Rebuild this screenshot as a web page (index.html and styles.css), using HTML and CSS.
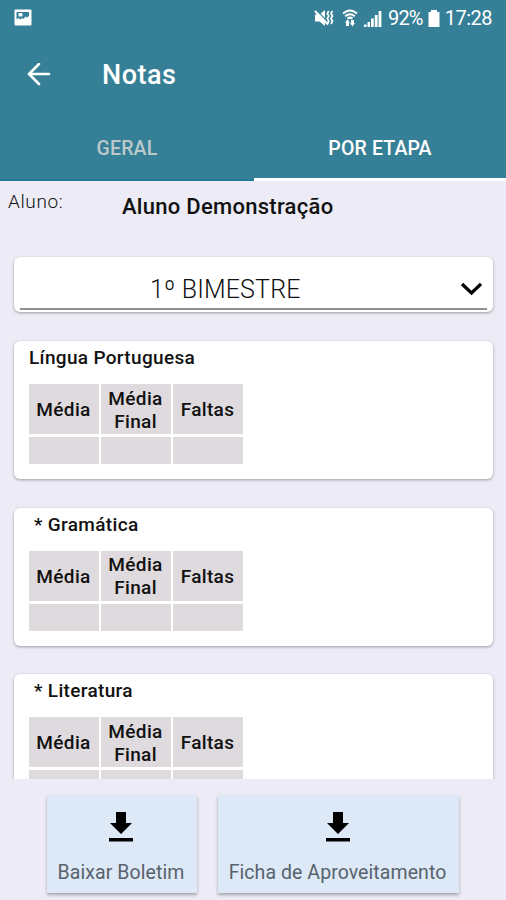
FILE: index.html
```html
<!DOCTYPE html>
<html lang="pt-BR">
<head>
<meta charset="utf-8">
<title>Notas</title>
<link rel="stylesheet" href="styles.css">
</head>
<body>
<div class="app">
  <header class="header">
    <div class="status">
      <svg class="status-photo" width="18" height="18" viewBox="0 0 18 18"><path fill="#fff" fill-rule="evenodd" d="M1.500 0.500h15q1 0 1 1v14q0 1-1 1h-15q-1 0-1-1v-14q0-1 1-1zM2.500 3v7.500l2-1.500 2 1.500 1.500-1.500 1.500 1 2-2.500 1.500 1 2-1.500V3z"/><rect x="4.500" y="4" width="4" height="3.500" rx="1" fill="#fff"/></svg>
      <div class="status-right">
        <svg class="i-mute" width="20" height="18" viewBox="0 0 20 18"><path fill="#fff" d="M1 5.500h4.500L11 1v16l-5.500-4.500H1z"/><path d="M2.500 1l12 13" stroke="#368097" stroke-width="1.200"/><path d="M1 2l13 13.500" stroke="#fff" stroke-width="2"/><path d="M14.800 2l-1.500 2.500 1.500 2.500-1.500 2.500 1.500 2.500-1.500 3M18.500 2L17 4.500 18.500 7 17 9.500l1.500 2.500-1.500 3" stroke="#fff" stroke-width="1.700" fill="none"/></svg>
        <svg class="i-wifi" width="16" height="18" viewBox="0 0 16 18"><path d="M1 4.500q7-6 14 0M3.200 7.200q4.800-4 9.600 0M5.500 9.600q2.500-2 5 0" stroke="#fff" stroke-width="2" fill="none"/><path fill="#fff" d="M3 13.500L5.500 10.500 8 13.500H7V17H4v-3.500zM9 11h3v3h1l-2.500 3.500L8 14h1z"/></svg>
        <svg class="i-signal" width="18" height="17" viewBox="0 0 18 17"><path fill="#fff" d="M0 14.500h2.500V17H0zM3.500 12H6v5H3.500zM7 8.500h2.800V17H7zM10.800 5h2.800v12h-2.800zM14.600 1h2.800v16h-2.800z"/></svg>
        <span class="pct">92%</span>
        <svg class="i-batt" width="12" height="17" viewBox="0 0 12 17"><path fill="#fff" d="M3 0h6v2h2.500v15H.5V2H3z"/></svg>
        <span class="clock">17:28</span>
      </div>
    </div>
    <div class="toolbar">
      <svg width="24" height="24" viewBox="0 0 24 24" fill="none" stroke="#fff" stroke-width="2.600" stroke-linecap="round"><path d="M22 11H2M12 1L2 11l10 10"/></svg>
      <h1 class="title">Notas</h1>
    </div>
    <nav class="tabs">
      <div class="tab"><span>GERAL</span></div>
      <div class="tab active"><span>POR ETAPA</span></div>
    </nav>
  </header>
  <div class="student"><span class="label">Aluno:</span><strong class="name">Aluno Demonstração</strong></div>
  <div class="select">
    <div class="select-line">
      <span class="select-value">1º BIMESTRE</span>
      <svg width="22" height="14" viewBox="0 0 22 14" fill="none" stroke="#000" stroke-width="3.200"><path d="M2 2l9.500 9L21 2"/></svg>
    </div>
  </div>
  <main class="list">
    <section class="card">
      <h2>Língua Portuguesa</h2>
      <div class="grades"><b>Média</b><b>Média<br>Final</b><b>Faltas</b><i></i><i></i><i></i></div>
    </section>
    <section class="card sub">
      <h2>* Gramática</h2>
      <div class="grades"><b>Média</b><b>Média<br>Final</b><b>Faltas</b><i></i><i></i><i></i></div>
    </section>
    <section class="card sub">
      <h2>* Literatura</h2>
      <div class="grades"><b>Média</b><b>Média<br>Final</b><b>Faltas</b><i></i><i></i><i></i></div>
    </section>
  </main>
  <footer class="actions">
    <div class="action small">
      <svg width="26" height="32" viewBox="0 0 26 32"><path d="M8 1h10v11h6L13 23 2 12h6zM1 27h24v3.500H1z"/></svg>
      <span>Baixar Boletim</span>
    </div>
    <div class="action wide">
      <svg width="26" height="32" viewBox="0 0 26 32"><path d="M8 1h10v11h6L13 23 2 12h6zM1 27h24v3.500H1z"/></svg>
      <span>Ficha de Aproveitamento</span>
    </div>
  </footer>
</div>
</body>
</html>
```
FILE: styles.css
```css
* { box-sizing: border-box; }
body { margin: 0; font-family: Roboto, sans-serif; color: #111; background: #edebf6; }
svg { display: block; flex: none; }
.app { width: 506px; height: 900px; overflow: hidden; display: flex; flex-direction: column; }
.header { height: 181px; flex: none; background: #368097; color: #fff; display: flex; flex-direction: column; }
.status { height: 36px; padding: 0 14px; display: flex; justify-content: space-between; align-items: center; }
.status-right { display: flex; align-items: center; font-size: 20px; }
.pct { letter-spacing: -0.8px; }
.clock { letter-spacing: -0.5px; }
.i-mute { margin-right: 8px; }
.i-wifi { margin-right: 6px; }
.i-signal { margin-right: 6px; }
.i-batt { margin: 0 5px 0 5px; }
.toolbar { height: 78px; padding: 0 27px; display: flex; align-items: center; }
.title { margin: 0 0 0 51px; font-size: 27px; font-weight: 500; line-height: 32px; letter-spacing: 0.5px; }
.tabs { flex: 1; display: flex; font-size: 19.500px; font-weight: 500; letter-spacing: 0.15px; }
.tab { width: 254px; display: flex; align-items: center; justify-content: center; padding-top: 3px; color: #bcc9cc; border-bottom: 2px solid #207b95; }
.tab.active { width: 252px; padding-top: 4px; color: #fff; border-bottom: 3px solid #fff; }
.student { height: 76px; flex: none; display: flex; padding: 8px 8px 0; }
.label { width: 114px; font-size: 19px; line-height: 26px; font-weight: 300; letter-spacing: 0.6px; }
.name { font-size: 22px; line-height: 36px; font-weight: 500; letter-spacing: 0.28px; }
.select { height: 55px; flex: none; margin: 0 13px 0 14px; padding: 0 6px; background: #fff; border-radius: 6px; box-shadow: 0 1px 3px rgba(0,0,0,.35); }
.select-line { height: 53px; border-bottom: 2px solid #909094; display: flex; align-items: center; padding: 13px 5px 0 0; }
.select-value { flex: 1; padding-left: 130px; font-size: 25px; font-weight: 300; letter-spacing: 0.15px; }
.list { height: 467px; flex: none; overflow: hidden; padding: 29px 13px 0 14px; display: flex; flex-direction: column; gap: 28.500px; }
.card { height: 138px; flex: none; background: #fff; border-radius: 6px; box-shadow: 0 1px 3px rgba(0,0,0,.35); padding: 5px 14px; }
.card h2 { margin: 0 0 14px; font-size: 19px; line-height: 24px; font-weight: 500; letter-spacing: 0.33px; padding-left: 1px; }
.card.sub h2 { padding-left: 6px; }
.grades { display: grid; grid-template: 50px 27px / repeat(3, 70px); gap: 3px 2px; padding-left: 0.5px; }
.grades b { background: #dfdade; font-size: 19px; line-height: 23px; font-weight: 500; letter-spacing: 0.35px; padding-top: 1px; display: flex; align-items: center; justify-content: center; text-align: center; }
.grades i { background: #dfdade; }
.actions { display: flex; gap: 21px; padding: 16px 47px 0; }
.action { height: 98px; background: #dde9f6; box-shadow: 0 2px 3px rgba(0,0,0,.3); display: flex; flex-direction: column; align-items: center; padding: 16px 2px 0 0; font-size: 19.500px; color: #58626c; }
.action span { line-height: 24px; margin-top: 18px; white-space: nowrap; letter-spacing: 0.07px; }
.small { width: 150px; }
.wide { width: 241px; }
```
